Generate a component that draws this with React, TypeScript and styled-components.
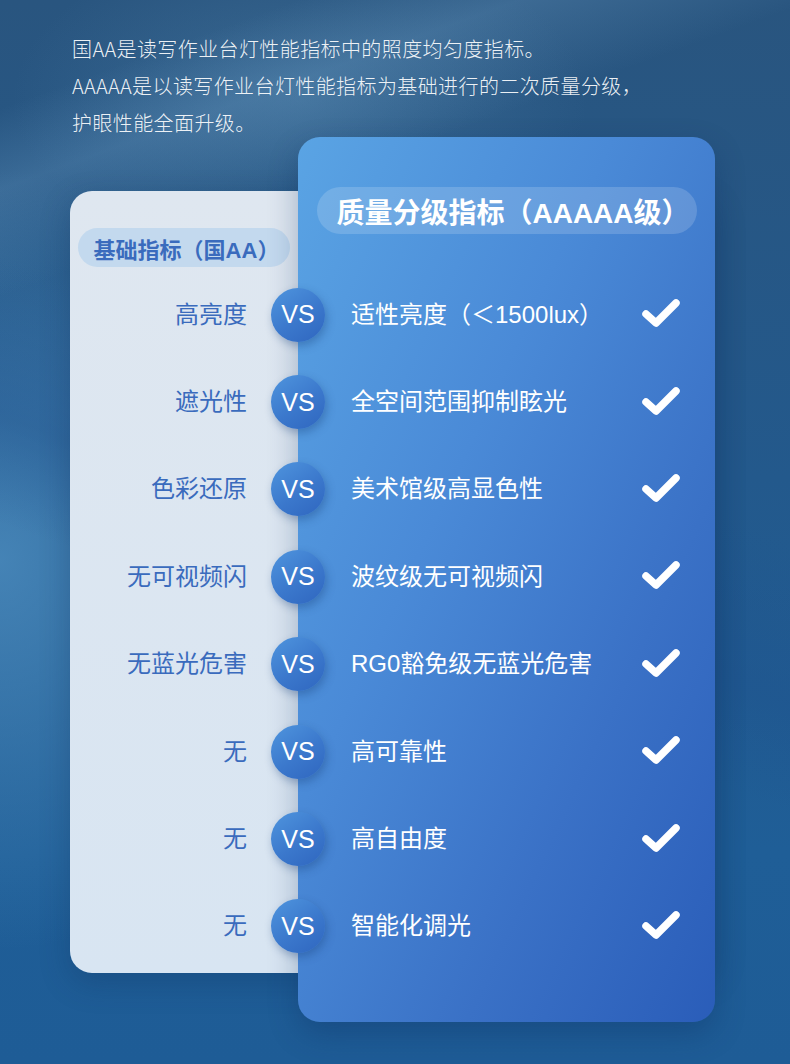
import styled, { createGlobalStyle } from 'styled-components';

const GlobalStyle = createGlobalStyle`
	html, body {
		margin: 0;
		padding: 0;
	}
	body {
		width: 790px;
		height: 1064px;
		overflow: hidden;
		font-family: 'Liberation Sans', 'Noto Sans CJK SC', sans-serif;
	}
`;

const Page = styled.div`
	width: 790px;
	height: 1064px;
	box-sizing: border-box;
	padding: 30px 0 0 70px;
	background:
		linear-gradient(160deg, rgba(120, 170, 210, 0) 8%, rgba(120, 170, 210, 0.25) 14%, rgba(120, 170, 210, 0) 22%),
		linear-gradient(200deg, rgba(20, 55, 105, 0) 40%, rgba(30, 80, 140, 0.35) 52%, rgba(20, 55, 105, 0) 60%),
		radial-gradient(ellipse 420px 520px at 0px 560px, rgba(80, 145, 195, 0.75), rgba(80, 145, 195, 0) 75%),
		radial-gradient(ellipse 360px 200px at 300px 100px, rgba(80, 130, 170, 0.45), rgba(80, 130, 170, 0) 80%),
		linear-gradient(180deg, #29557f 0%, #23598c 45%, #1f5e97 80%, #1e5c96 100%);
	background-color: #24598a;
`;

const Intro = styled.div`
	height: 107px;
	padding-left: 2px;
	color: rgba(255, 255, 255, 0.92);
	font-family: 'Noto Sans CJK SC', sans-serif;
	font-size: 20px;
	font-weight: 300;
	letter-spacing: 0.4px;
	line-height: 37px;
	p {
		margin: 0;
	}
`;

const Board = styled.div`
	display: grid;
	grid-template-columns: 228px 417px;
	grid-template-rows: 54px 782px 49px;
`;

const BaseCard = styled.div`
	grid-column: 1 / 3;
	grid-row: 2;
	z-index: 0;
	border-radius: 22px;
	background: linear-gradient(180deg, #dfe7f0 0%, #d8e5f2 100%);
	box-shadow: 0 10px 30px rgba(10, 40, 80, 0.25);
	padding: 37px 0 0 8px;
`;

const QualityCard = styled.div`
	grid-column: 2;
	grid-row: 1 / 4;
	z-index: 1;
	border-radius: 22px;
	background: linear-gradient(115deg, #5aa4e4 0%, #4a8ad7 38%, #3a71c6 70%, #2a5db9 100%);
	box-shadow: 0 12px 30px rgba(10, 40, 90, 0.3);
	padding: 50px 18px 0 19px;
`;

const Pill = styled.div<{ $light?: boolean }>`
	display: flex;
	align-items: center;
	justify-content: center;
	box-sizing: border-box;
	font-weight: 700;
	white-space: nowrap;
	${({ $light }) =>
		$light
			? `
		width: 212px;
		height: 39px;
		padding-left: 5px;
		border-radius: 20px;
		background: #c3d9ee;
		color: #3a6bbd;
		font-size: 22px;
		`
			: `
		height: 47px;
		padding-left: 12px;
		border-radius: 24px;
		background: rgba(255, 255, 255, 0.16);
		color: #ffffff;
		font-size: 28px;
		`}
`;

const Rows = styled.div`
	grid-column: 1 / 3;
	grid-row: 2;
	z-index: 2;
	padding-top: 80px;
	display: flex;
	flex-direction: column;
`;

const Row = styled.div`
	height: 87.4px;
	display: grid;
	grid-template-columns: 177px 54px 1fr 40px;
	column-gap: 24px;
	align-items: center;
	padding-right: 34px;
	.base {
		text-align: right;
		color: #3a6bbd;
		font-size: 24px;
		line-height: 1;
	}
	.quality {
		margin-left: 2px;
		color: #ffffff;
		font-size: 24px;
		line-height: 1;
		white-space: nowrap;
	}
	svg {
		margin-top: -3px;
	}
`;

const Vs = styled.div`
	width: 54px;
	height: 54px;
	border-radius: 50%;
	display: flex;
	align-items: center;
	justify-content: center;
	color: #ffffff;
	font-size: 25px;
	background: linear-gradient(145deg, #4f95de 0%, #3b78cc 55%, #2f66bf 100%);
	box-shadow: 2px 4px 8px rgba(20, 60, 120, 0.35);
`;

const Check = () => (
	<svg width="40" height="30" viewBox="0 0 40 30">
		<path d="M5 16 L15 25 L35 5" fill="none" stroke="#ffffff" strokeWidth="7.5" strokeLinecap="round" strokeLinejoin="round" />
	</svg>
);

const ROWS: [string, string][] = [
	['高亮度', '适性亮度（＜1500lux）'],
	['遮光性', '全空间范围抑制眩光'],
	['色彩还原', '美术馆级高显色性'],
	['无可视频闪', '波纹级无可视频闪'],
	['无蓝光危害', 'RG0豁免级无蓝光危害'],
	['无', '高可靠性'],
	['无', '高自由度'],
	['无', '智能化调光'],
];

export default function App() {
	return (
		<>
			<GlobalStyle />
			<Page>
				<Intro>
					<p>国AA是读写作业台灯性能指标中的照度均匀度指标。</p>
					<p>AAAAA是以读写作业台灯性能指标为基础进行的二次质量分级，</p>
					<p>护眼性能全面升级。</p>
				</Intro>
				<Board>
					<BaseCard>
						<Pill $light>基础指标（国AA）</Pill>
					</BaseCard>
					<QualityCard>
						<Pill>质量分级指标（AAAAA级）</Pill>
					</QualityCard>
					<Rows>
						{ROWS.map(([base, quality], i) => (
							<Row key={i}>
								<span className="base">{base}</span>
								<Vs>VS</Vs>
								<span className="quality">{quality}</span>
								<Check />
							</Row>
						))}
					</Rows>
				</Board>
			</Page>
		</>
	);
}
